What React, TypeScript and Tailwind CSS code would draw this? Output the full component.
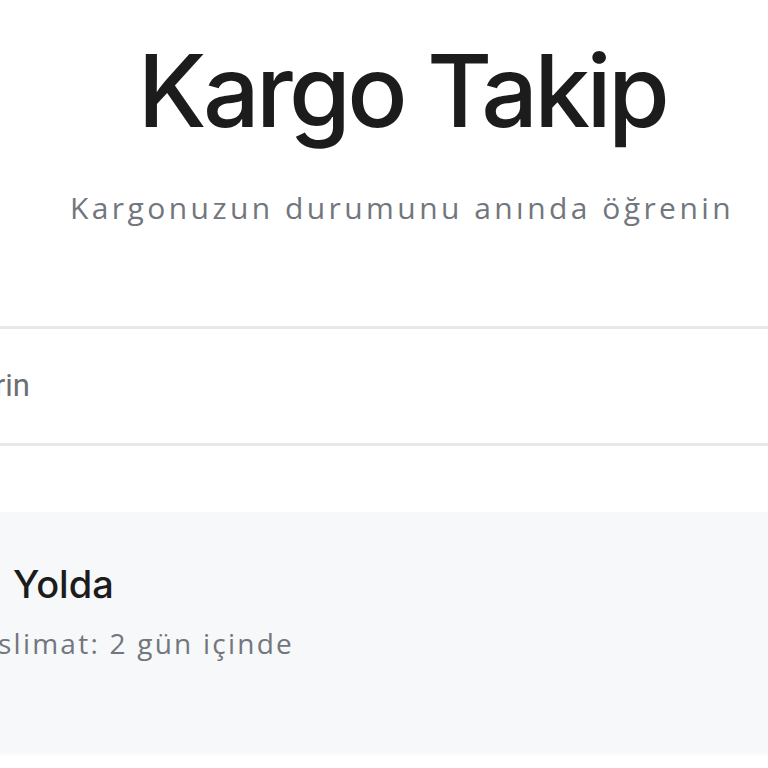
export default function App() {
  return (
    <div className="relative h-[768px] w-[768px] overflow-hidden bg-white">
      <div className="flex flex-col items-center pl-[36px] pt-[36px]">
        <h1
          className="text-[100px] leading-[1.1] font-medium tracking-[-0.037em] text-[#1c1c1c]"
          style={{ fontFamily: 'Inter, "Noto Sans", sans-serif' }}
        >
          Kargo Takip
        </h1>
        <p
          className="mt-[42px] text-[30px] leading-[1.3] tracking-[0.115em] whitespace-nowrap text-[#72767d]"
          style={{ fontFamily: '"Open Sans", "Noto Sans", sans-serif' }}
        >
          Kargonuzun durumunu anında öğrenin
        </p>
      </div>

      <div className="-ml-[400px] mt-[99px] w-[1600px] border-y-[3px] border-[#e7e8ea] bg-white">
        <div className="flex h-[114px] items-center">
          <div
            className="w-[430px] whitespace-nowrap text-right text-[31px] text-[#6b6e72]"
            style={{ fontFamily: 'Roboto, "Noto Sans", sans-serif' }}
          >
            Takip numaranızı girin
          </div>
        </div>
      </div>

      <div className="-ml-[400px] mt-[66px] h-[240px] w-[1600px] bg-[#f7f8fa] shadow-[0_2px_4px_rgba(0,0,0,0.03)]">
        <div className="flex flex-col pt-[44px]">
          <div className="flex items-baseline">
            <span
              className="w-[402px] whitespace-nowrap text-right text-[38px] font-medium text-[#1c1c1c]"
              style={{ fontFamily: 'Inter, "Noto Sans", sans-serif' }}
            >
              Durum:
            </span>
            <span
              className="ml-[11px] text-[38px] font-medium text-[#1c1c1c]"
              style={{ fontFamily: 'Inter, "Noto Sans", sans-serif' }}
            >
              Yolda
            </span>
          </div>
          <div className="mt-[9px] flex">
            <span
              className="w-[398px] whitespace-nowrap text-right text-[28px] tracking-[0.08em] text-[#72767d]"
              style={{ fontFamily: '"Open Sans", "Noto Sans", sans-serif' }}
            >
              Tahmini te
            </span>
            <span
              className="whitespace-nowrap text-[28px] tracking-[0.08em] text-[#72767d]"
              style={{ fontFamily: '"Open Sans", "Noto Sans", sans-serif' }}
            >
              slimat: 2 gün içinde
            </span>
          </div>
        </div>
      </div>
    </div>
  )
}
